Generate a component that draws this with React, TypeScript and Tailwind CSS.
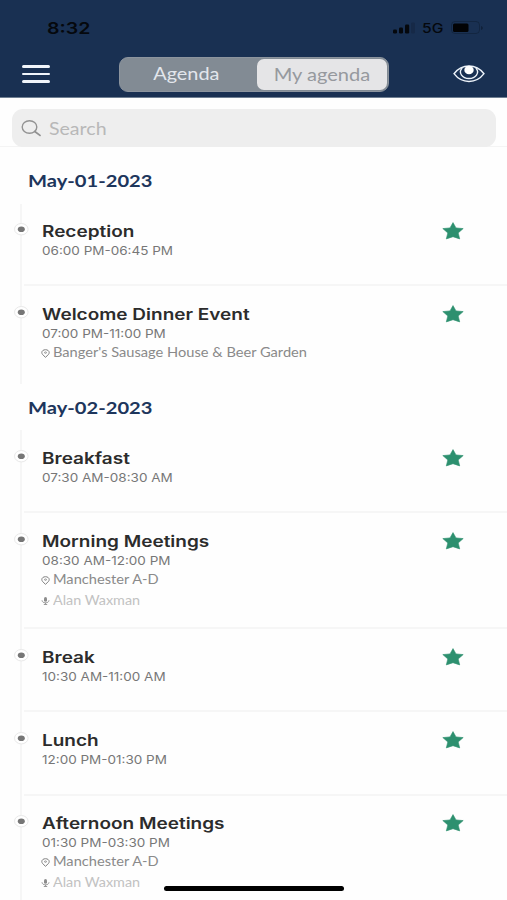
import clsx from 'clsx';

type Session = {
  title: string;
  time: string;
  place?: string;
  speaker?: string;
  height: string;
};

type Day = {
  date: string;
  heading: string;
  sessions: Session[];
};

const days: Day[] = [
  {
    date: 'May-01-2023',
    heading: 'h-[57px] pt-[22px]',
    sessions: [
      { title: 'Reception', time: '06:00 PM-06:45 PM', height: 'h-[82px] pt-[16px]' },
      {
        title: 'Welcome Dinner Event',
        time: '07:00 PM-11:00 PM',
        place: "Banger's Sausage House & Beer Garden",
        height: 'h-[98px] pt-[17px]',
      },
    ],
  },
  {
    date: 'May-02-2023',
    heading: 'h-[46px] pt-[12px]',
    sessions: [
      { title: 'Breakfast', time: '07:30 AM-08:30 AM', height: 'h-[83px] pt-[17px]' },
      {
        title: 'Morning Meetings',
        time: '08:30 AM-12:00 PM',
        place: 'Manchester A-D',
        speaker: 'Alan Waxman',
        height: 'h-[116px] pt-[17px]',
      },
      { title: 'Break', time: '10:30 AM-11:00 AM', height: 'h-[83px] pt-[17px]' },
      { title: 'Lunch', time: '12:00 PM-01:30 PM', height: 'h-[84px] pt-[17px]' },
      {
        title: 'Afternoon Meetings',
        time: '01:30 PM-03:30 PM',
        place: 'Manchester A-D',
        speaker: 'Alan Waxman',
        height: 'h-[105px] pt-[16px]',
      },
    ],
  },
];

function StatusBar() {
  return (
    <div className="flex h-[56px] items-start justify-between pl-[47px] pr-[23px] pt-[18px]">
      <span className="origin-left scale-x-[1.22] font-['Inter'] text-[16px] font-semibold leading-5 text-[#05080d]">
        8:32
      </span>
      <div className="flex h-5 items-center">
        <svg width="24" height="14" viewBox="0 0 24 14" fill="#05080d">
          <rect x="0" y="8.5" width="4" height="4" rx="1.2" />
          <rect x="6" y="6.5" width="4" height="6" rx="1.2" />
          <rect x="12" y="3.5" width="4.2" height="9" rx="1.2" />
          <rect x="18" y="1.5" width="4" height="11" rx="1.2" opacity="0.15" />
        </svg>
        <span className="ml-[5px] w-[21px] origin-left scale-x-[1.2] font-['Inter'] text-[13px] font-medium leading-5 text-[#05080d]">
          5G
        </span>
        <svg className="ml-[8px]" width="33" height="14" viewBox="0 0 33 14">
          <rect x="0.5" y="0.5" width="28" height="12" rx="3.5" fill="none" stroke="#0d1b30" opacity="0.5" />
          <rect x="2" y="2.500" width="15.500" height="8.500" rx="1.500" fill="#020305" />
          <path d="M30 5v4c1-.3 1.800-1 1.800-2S31 5.300 30 5Z" fill="#0d1b30" opacity="0.7" />
        </svg>
      </div>
    </div>
  );
}

function Header() {
  return (
    <header className="h-[98px] border-b border-[#6f7f92] bg-[#193052]">
      <StatusBar />
      <div className="flex h-[36px] items-center justify-between pl-[22px] pr-[22px]">
        <button className="flex w-7 flex-col gap-[5px]">
          <span className="h-[2.5px] rounded-full bg-[#f1f5fb]" />
          <span className="h-[2.5px] rounded-full bg-[#f1f5fb]" />
          <span className="h-[2.5px] rounded-full bg-[#f1f5fb]" />
        </button>
        <div className="ml-[5px] flex h-[35px] w-[270px] rounded-[9px] border border-[#8c949e] bg-[#828b94] font-['Lato'] text-[17px]">
          <button className="flex flex-1 items-center justify-center pr-[4px] text-[#e2e6ec]">
            <span className="scale-x-[1.17]">Agenda</span>
          </button>
          <button className="m-px flex w-[130px] items-center justify-center rounded-[7px] bg-[#e5e5e7] text-[#96999e]">
            <span className="mt-px scale-x-[1.18]">My agenda</span>
          </button>
        </div>
        <svg width="32" height="18" viewBox="0 0 32 18" fill="none" stroke="#edf3fa" strokeWidth="1.4">
          <path d="M1 8.700C5 3.600 10 1 16 1s11 2.600 15 7.700c-4 5.300-9 7.800-15 7.800S5 14 1 8.700Z" />
          <path d="M9.200 3C7.300 5 7 8 8.500 10.100 10 12.300 12.800 13.500 16 13.500s6-1.200 7.500-3.400C25 8 24.700 5 22.800 3" />
          <ellipse cx="16" cy="5" rx="4.700" ry="4.300" fill="#fff" stroke="none" />
        </svg>
      </div>
    </header>
  );
}

function SearchBar() {
  return (
    <div className="h-[49px] border-b border-[#f4f4f4] px-3 pt-[11px] pr-[11px]">
      <div className="flex h-[38px] items-center rounded-[11px] bg-[#eeeeee] pl-[9px]">
        <svg width="22" height="18" viewBox="0 0 22 18" fill="none" stroke="#929292" strokeWidth="1.4">
          <ellipse cx="8.500" cy="8" rx="7.300" ry="6.300" />
          <path d="m13.800 12.500 5.200 3.900" strokeLinecap="round" strokeWidth="1.8" />
        </svg>
        <span className="ml-[6px] mt-px origin-left scale-x-[1.15] font-['Lato'] text-[17px] text-[#b8b8b8]">Search</span>
      </div>
    </div>
  );
}

function SessionRow({ session, last }: { session: Session; last: boolean }) {
  return (
    <li className={clsx('flex', session.height)}>
      {/* timeline marker */}
      <svg className="mt-[2px] w-[16px] shrink-0" width="16" height="14" viewBox="0 0 16 14">
        <ellipse cx="8.300" cy="7.200" rx="6.800" ry="5.700" fill="#fff" stroke="#e9e9e9" />
        <ellipse cx="8.300" cy="7.200" rx="3.500" ry="2.800" fill="#767676" />
      </svg>
      <div
        className={clsx(
          'relative flex-1 pl-[13px]',
          !last && 'after:absolute after:-right-0 after:bottom-0 after:-left-[5px] after:h-[2px] after:bg-[#f6f6f6]'
        )}
      >
        <h3 className="mt-px w-max origin-left scale-x-[1.225] font-['Inter'] text-[15.5px] font-semibold leading-[22px] text-[#2c2c2c]">
          {session.title}
        </h3>
        <p className="-mt-px w-max origin-left scale-x-[1.175] font-['Inter'] text-[11.5px] leading-[18px] text-[#777777]">
          {session.time}
        </p>
        {session.place && (
          <p className="flex h-[20px] items-center font-['Lato'] text-[12.5px] text-[#8a8a8a]">
            <svg className="-ml-px" width="9" height="9" viewBox="0 0 9 9" fill="none" stroke="#808080" strokeWidth="1">
              <path d="M4.500 8.300C2.200 6.300.8 5 .8 3.600.8 1.900 2.400.7 4.500.7s3.700 1.200 3.700 2.900c0 1.400-1.400 2.700-3.700 4.700Z" />
              <ellipse cx="4.500" cy="3.600" rx="1" ry="0.700" strokeWidth="0.8" />
            </svg>
            <span className="ml-[3px] origin-left scale-x-[1.17] whitespace-nowrap">{session.place}</span>
          </p>
        )}
        {session.speaker && (
          <p className="flex h-[21px] items-center pt-px font-['Lato'] text-[12.5px] text-[#c2c2c2]">
            <svg className="-ml-px" width="9" height="8" viewBox="0 0 9 8" fill="none" stroke="#999" strokeWidth="1">
              <rect x="3" y="0" width="3" height="4.800" rx="1.500" fill="#8d8d8d" stroke="none" />
              <path d="M1 3.300C1.200 5 2.500 5.800 4.500 5.800S7.800 5 8 3.300M4.500 5.800v1.700M2.800 7.500h3.400" />
            </svg>
            <span className="ml-[3px] mt-px origin-left scale-x-[1.15] whitespace-nowrap">{session.speaker}</span>
          </p>
        )}
      </div>
      <svg className="relative -ml-[65px] mr-[43px] mt-[2px]" width="22" height="18" viewBox="0 0 22 18" fill="#2d906f">
        <path
          d="M11 .6 14 5.900l7.200.7-5 4.300 1.500 6L11 14.700l-6.700 2.200 1.500-6-5-4.300L8 5.900 11 .6Z"
          stroke="#2d906f"
          strokeWidth="0.6"
          strokeLinejoin="round"
        />
      </svg>
    </li>
  );
}

export default function App() {
  return (
    <div className="relative h-[900px] w-[507px] overflow-hidden bg-[#fefefe]">
      <Header />
      <SearchBar />
      <main>
        {days.map((day) => (
          <section key={day.date}>
            <h2
              className={clsx(
                "ml-[28px] w-max origin-left scale-x-[1.185] font-['Lato'] text-[17px] font-bold leading-[23px] text-[#1d365c]",
                day.heading
              )}
            >
              {day.date}
            </h2>
            <ul className="bg-[linear-gradient(#f6f6f6,#f6f6f6)] bg-[length:2px_100%] bg-[position:20px_0] bg-no-repeat pl-[13px]">
              {day.sessions.map((session, i) => (
                <SessionRow key={session.title} session={session} last={i === day.sessions.length - 1} />
              ))}
            </ul>
          </section>
        ))}
      </main>
      {/* home indicator */}
      <div className="absolute bottom-[9px] left-[164px] h-[5px] w-[180px] rounded-full bg-black" />
    </div>
  );
}
